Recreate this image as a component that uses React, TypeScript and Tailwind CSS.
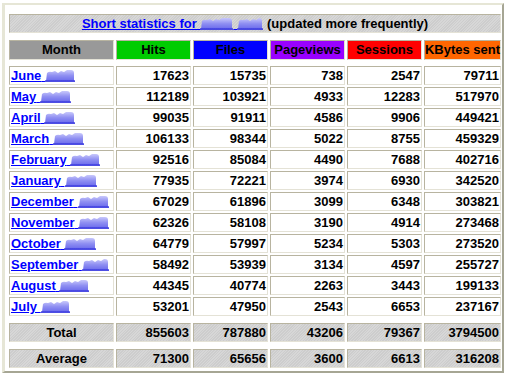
import React, { useId } from 'react';

type Row = { month: string; blob: number; vals: number[] };

const rows: Row[] = [
  { month: 'June', blob: 30, vals: [17623, 15735, 738, 2547, 79711] },
  { month: 'May', blob: 31, vals: [112189, 103921, 4933, 12283, 517970] },
  { month: 'April', blob: 31, vals: [99035, 91911, 4586, 9906, 449421] },
  { month: 'March', blob: 31, vals: [106133, 98344, 5022, 8755, 459329] },
  { month: 'February', blob: 30, vals: [92516, 85084, 4490, 7688, 402716] },
  { month: 'January', blob: 32, vals: [77935, 72221, 3974, 6930, 342520] },
  { month: 'December', blob: 31, vals: [67029, 61896, 3099, 6348, 303821] },
  { month: 'November', blob: 31, vals: [62326, 58108, 3190, 4914, 273468] },
  { month: 'October', blob: 32, vals: [64779, 57997, 5234, 5303, 273520] },
  { month: 'September', blob: 27, vals: [58492, 53939, 3134, 4597, 255727] },
  { month: 'August', blob: 30, vals: [44345, 40774, 2263, 3443, 199133] },
  { month: 'July', blob: 29, vals: [53201, 47950, 2543, 6653, 237167] },
];

const totals = [855603, 787880, 43206, 79367, 3794500];
const averages = [71300, 65656, 3600, 6613, 316208];

const headers = [
  { label: 'Month', bg: 'bg-[#999999]' },
  { label: 'Hits', bg: 'bg-[#00cc00]' },
  { label: 'Files', bg: 'bg-[#0000ff]' },
  { label: 'Pageviews', bg: 'bg-[#9900ff]' },
  { label: 'Sessions', bg: 'bg-[#ff0000]' },
  { label: 'KBytes sent', bg: 'bg-[#ff6600]' },
];

const cols = 'grid grid-cols-[105px_75px_75px_75px_75px_77px] gap-x-[2px]';
const cell =
  'h-[19px] flex items-center border border-t-[#b8b4a0] border-l-[#b8b4a0] border-r-[#e4e2d6] border-b-[#e4e2d6]';
const hatch =
  'bg-[repeating-linear-gradient(135deg,#cdcdcd_0px,#cdcdcd_1px,#d7d7d7_1px,#d7d7d7_2px)]';

// blurred (redacted) name
const Blob = ({ w }: { w: number }) => {
  const id = useId().replace(/:/g, '');
  return (
    <svg width={w} height={14} viewBox={`0 0 ${w} 14`} className="inline-block align-[-3px]">
      <defs>
        <filter id={`b${id}`} x="-10%" y="-20%" width="120%" height="140%">
          <feGaussianBlur stdDeviation="0.7" />
        </filter>
        <linearGradient id={`g${id}`} x1="0" y1="0" x2="0" y2="1">
          <stop offset="0" stopColor="#c8c8fb" />
          <stop offset="0.5" stopColor="#9090f2" />
          <stop offset="1" stopColor="#6a6aec" />
        </linearGradient>
      </defs>
      <g filter={`url(#b${id})`}>
        <path
          d={`M1 12 L2 4 Q4 2 7 3 L10 2 L13 4 L16 2 L19 3 L22 1 L${w - 4} 1 Q${w - 1} 1 ${w - 1} 4 L${w - 1} 12 Z`}
          fill={`url(#g${id})`}
        />
        <rect x="0" y="11.3" width={w} height="1.6" fill="#3c3ce0" />
      </g>
    </svg>
  );
};

const App = () => {
  return (
    <div className="w-[510px] h-[377px] bg-white font-['Liberation_Sans',Arial,sans-serif] text-[13px] font-bold text-black">
      <div className="ml-[2px] mt-[3px] w-[502px] border-t-2 border-l-[3px] border-r-2 border-b-2 border-t-[#e6e6d6] border-l-[#e6e6d6] border-r-[#a6a694] border-b-[#a6a694] pl-[4px] pr-[1px] pt-[9px] pb-[3px]">
        {/* title */}
        <div className={`${cell} ${hatch} h-[19px] justify-center whitespace-nowrap`}>
          <a href="#" className="text-[#0000ff] underline">
            Short statistics for <Blob w={33} /> <Blob w={26} />
          </a>
          <span className="ml-[4px]">(updated more frequently)</span>
        </div>

        {/* header */}
        <div className={`${cols} mt-[7px]`}>
          {headers.map((h) => (
            <div key={h.label} className={`${cell} ${h.bg} h-[20px] justify-center whitespace-nowrap`}>
              {h.label}
            </div>
          ))}
        </div>

        {/* months */}
        <div className="mt-[6px] flex flex-col gap-y-[2px]">
          {rows.map((r) => (
            <div key={r.month} className={cols}>
              <div className={`${cell} pl-[1px] whitespace-nowrap`}>
                <a href="#" className="text-[#0000ff] underline">
                  {r.month} <Blob w={r.blob} />
                </a>
              </div>
              {r.vals.map((v, i) => (
                <div key={i} className={`${cell} justify-end pr-[1px]`}>
                  {v}
                </div>
              ))}
            </div>
          ))}
        </div>

        {/* total */}
        <div className={`${cols} mt-[7px]`}>
          <div className={`${cell} ${hatch} justify-center`}>Total</div>
          {totals.map((v, i) => (
            <div key={i} className={`${cell} ${hatch} justify-end pr-[1px]`}>
              {v}
            </div>
          ))}
        </div>

        {/* average */}
        <div className={`${cols} mt-[7px]`}>
          <div className={`${cell} ${hatch} justify-center`}>Average</div>
          {averages.map((v, i) => (
            <div key={i} className={`${cell} ${hatch} justify-end pr-[1px]`}>
              {v}
            </div>
          ))}
        </div>
      </div>
    </div>
  );
};

export default App;
